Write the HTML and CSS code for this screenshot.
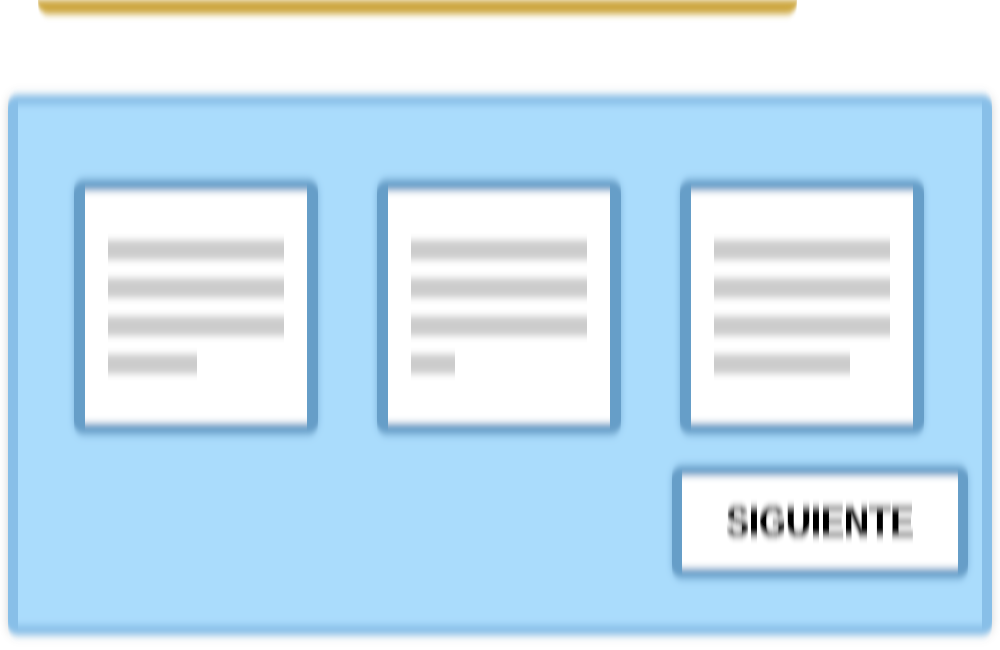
FILE: index.html
```html
<html>
	<head>
		<title>Siguiente</title>
		<meta charset="utf-8" />
		<link rel="stylesheet" href="styles.css">
	</head>
	<body>
		<svg class="defs" width="0" height="0">
			<filter id="soft" x="-5%" y="-5%" width="110%" height="110%">
				<feGaussianBlur stdDeviation="0.6 3.5" />
			</filter>
		</svg>
		<div class="page">
			<div class="topbar"></div>
			<div class="panel">
				<div class="cards">
					<div class="card">
						<div class="line"></div>
						<div class="line"></div>
						<div class="line"></div>
						<div class="line" style="width: 89px;"></div>
					</div>
					<div class="card">
						<div class="line"></div>
						<div class="line"></div>
						<div class="line"></div>
						<div class="line" style="width: 44px;"></div>
					</div>
					<div class="card">
						<div class="line"></div>
						<div class="line"></div>
						<div class="line"></div>
						<div class="line" style="width: 136px;"></div>
					</div>
				</div>
				<div class="actions">
					<button class="next"><span>SIGUIENTE</span></button>
				</div>
			</div>
		</div>
	</body>
</html>
```

FILE: styles.css
```css
body {
	margin: 0;
	background: #fff;
	font-family: "Liberation Sans", Arial, sans-serif;
}
.defs {
	position: absolute;
}
.page {
	filter: url(#soft);
	padding: 0 8px;
}
.topbar {
	margin-left: 30px;
	width: 759px;
	height: 14px;
	background: #cca63e;
	border-radius: 0 0 12px 12px;
}
.panel {
	margin-top: 81px;
	background: #aadcfc;
	border: 10px solid #88bfe8;
	border-radius: 10px;
	box-shadow: 0 0 10px rgba(0, 0, 0, 0.18);
	padding: 75px 14px 0 56px;
	box-sizing: border-box;
	height: 540px;
}
.cards {
	display: flex;
	gap: 59px;
}
.card {
	width: 244px;
	box-sizing: border-box;
	background: #fff;
	border: 11px solid #669ec8;
	border-radius: 11px;
	padding: 49px 23px;
	display: flex;
	flex-direction: column;
	gap: 18px;
	box-shadow: 0 0 6px rgba(60, 120, 170, 0.4);
}
.line {
	height: 20px;
	background: #cccccc;
}
.actions {
	display: flex;
	justify-content: flex-end;
	margin-top: 32px;
}
.next {
	width: 296px;
	height: 112px;
	background: #fff;
	border: 10px solid #669ec8;
	border-radius: 11px;
	font-family: "Liberation Sans", Arial, sans-serif;
	font-weight: bold;
	font-size: 34px;
	color: #000;
	letter-spacing: 0.5px;
	outline: 0;
	box-shadow: 0 0 6px rgba(60, 120, 170, 0.4);
}
.next span {
	display: inline-block;
	transform: scaleY(1.3);
	text-shadow: 0.5px 0 0 #000, -0.5px 0 0 #000;
}
```
